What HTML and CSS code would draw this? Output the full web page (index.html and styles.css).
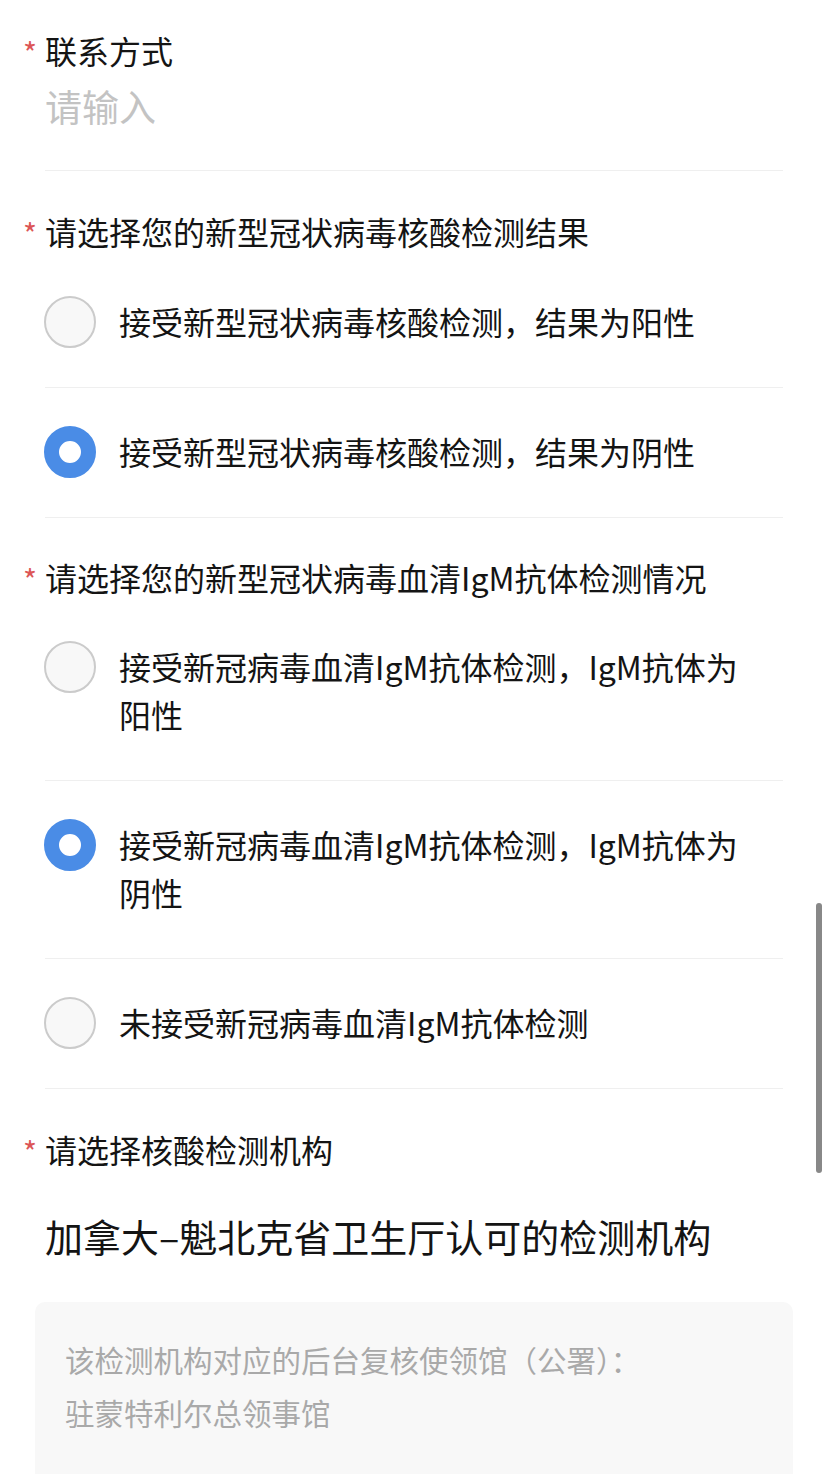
FILE: index.html
```html
<!DOCTYPE html>
<html lang="zh-CN">
<head>
    <meta charset="UTF-8">
    <meta name="viewport" content="width=device-width, initial-scale=1.0">
    <title>健康申报</title>
    <link rel="stylesheet" href="styles.css">
</head>
<body>
    <div class="form">
        <!-- 联系方式 -->
        <div class="field field-first">
            <div class="label"><span class="req">*</span>联系方式</div>
            <div class="input placeholder">请输入</div>
        </div>

        <!-- 核酸检测结果 -->
        <div class="field">
            <div class="label"><span class="req">*</span>请选择您的新型冠状病毒核酸检测结果</div>
            <div class="option">
                <span class="radio"></span>
                <span class="option-text">接受新型冠状病毒核酸检测，结果为阳性</span>
            </div>
            <div class="option">
                <span class="radio checked"></span>
                <span class="option-text">接受新型冠状病毒核酸检测，结果为阴性</span>
            </div>
        </div>

        <!-- 血清IgM抗体 -->
        <div class="field field-tight">
            <div class="label"><span class="req">*</span>请选择您的新型冠状病毒血清IgM抗体检测情况</div>
            <div class="option">
                <span class="radio"></span>
                <span class="option-text">接受新冠病毒血清IgM抗体检测，IgM抗体为阳性</span>
            </div>
            <div class="option">
                <span class="radio checked"></span>
                <span class="option-text">接受新冠病毒血清IgM抗体检测，IgM抗体为阴性</span>
            </div>
            <div class="option">
                <span class="radio"></span>
                <span class="option-text">未接受新冠病毒血清IgM抗体检测</span>
            </div>
        </div>

        <!-- 检测机构 -->
        <div class="field field-last">
            <div class="label"><span class="req">*</span>请选择核酸检测机构</div>
            <div class="value">加拿大–魁北克省卫生厅认可的检测机构</div>
            <div class="note">
                <p>该检测机构对应的后台复核使领馆（公署）：</p>
                <p>驻蒙特利尔总领事馆</p>
            </div>
        </div>
    </div>

    <div class="scrollbar"></div>
</body>
</html>
```

FILE: styles.css
```css
body {
    margin: 0;
    padding: 0;
    background: #fff;
    color: #141414;
    font-family: "Noto Sans CJK SC", "Noto Sans", sans-serif;
    position: relative;
    height: 1474px;
    overflow: hidden;
}
.form {
    padding: 0 45px;
}
.field {
    padding-top: 36px;
}
.field-first {
    padding-top: 26px;
}
.field-tight {
    padding-top: 35px;
}
.field-tight .label {
    margin-bottom: 2px;
}
.label {
    display: flex;
    align-items: center;
    margin-left: -22px;
    margin-bottom: 3px;
    font-size: 32px;
    line-height: 48px;
    height: 48px;
    white-space: nowrap;
}
.field-first .label {
    margin-bottom: 0;
}
.req {
    width: 22px;
    color: #dc5656;
    font-size: 30px;
    line-height: 30px;
    height: 30px;
    margin-top: 4px;
}
.input {
    font-size: 37px;
    line-height: 48px;
    margin-top: 8px;
    padding-bottom: 40px;
    border-bottom: 1px solid #efefef;
}
.placeholder {
    color: #c3c3c3;
}
.option {
    display: flex;
    align-items: flex-start;
    gap: 23px;
    padding: 39px 40px 42px 0;
    border-bottom: 1px solid #efefef;
}
.radio {
    flex: none;
    width: 52px;
    height: 52px;
    margin: -1px 0 -5px -1px;
    box-sizing: border-box;
    border: 2px solid #cbcbcb;
    border-radius: 50%;
    background: #f8f8f8;
}
.radio.checked {
    border: 15px solid #4a8ce6;
    background: #fff;
}
.option-text {
    font-size: 32px;
    line-height: 48px;
}
.value {
    font-size: 38px;
    line-height: 50px;
    margin-top: 38px;
}
.note {
    margin: 41px -10px 0;
    padding: 31px 30px 60px;
    background: #f8f8f8;
    border-radius: 10px;
    color: #a9a9a9;
    font-size: 29.5px;
    line-height: 53px;
}
.note p {
    margin: 0;
}
.scrollbar {
    position: absolute;
    left: 816px;
    top: 903px;
    width: 6px;
    height: 270px;
    border-radius: 3px;
    background: #888;
}
```
